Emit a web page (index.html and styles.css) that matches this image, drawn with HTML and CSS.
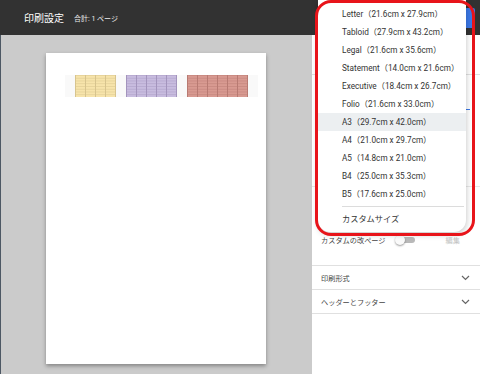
FILE: index.html
```html
<!doctype html>
<html>
	<head>
		<meta charset="utf-8" />
		<title>印刷設定</title>
		<link rel="stylesheet" href="styles.css">
	</head>
	<body>
		<div class="class___app">
			<div class="class___preview">
				<header class="class___topbar">
					<h1 class="class___title">印刷設定</h1>
					<span class="class___total">合計: 1 ページ</span>
				</header>
				<div class="class___stage">
					<div class="class___page">
						<div class="class___sheets">
							<div class="class___sheet class___yellow"></div>
							<div class="class___sheet class___purple"></div>
							<div class="class___sheet class___red"></div>
						</div>
					</div>
				</div>
			</div>
			<aside class="class___side">
				<div class="class___side_head">
					<span class="class___save"></span>
				</div>
				<div class="class___side_body">
					<div class="class___field"><span class="class___underline"></span></div>
					<div class="class___field class___field_tall"></div>
					<div class="class___field class___field_plain"></div>
					<div class="class___row class___row_toggle">
						<span>カスタムの改ページ</span>
						<span class="class___toggle"><span class="class___knob"></span></span>
						<span class="class___edit">編集</span>
					</div>
					<div class="class___row">
						<span>印刷形式</span>
						<svg class="class___chev" width="9" height="6" viewBox="0 0 9 6"><polyline points="1,1 4.5,4.5 8,1" fill="none" stroke="#666" stroke-width="1.2"/></svg>
					</div>
					<div class="class___row">
						<span>ヘッダーとフッター</span>
						<svg class="class___chev" width="9" height="6" viewBox="0 0 9 6"><polyline points="1,1 4.5,4.5 8,1" fill="none" stroke="#666" stroke-width="1.2"/></svg>
					</div>
				</div>
			</aside>
		</div>
		<ul class="class___menu">
			<li>Letter（21.6cm x 27.9cm）</li>
			<li>Tabloid（27.9cm x 43.2cm）</li>
			<li>Legal（21.6cm x 35.6cm）</li>
			<li>Statement（14.0cm x 21.6cm）</li>
			<li>Executive（18.4cm x 26.7cm）</li>
			<li>Folio（21.6cm x 33.0cm）</li>
			<li class="class___active">A3（29.7cm x 42.0cm）</li>
			<li>A4（21.0cm x 29.7cm）</li>
			<li>A5（14.8cm x 21.0cm）</li>
			<li>B4（25.0cm x 35.3cm）</li>
			<li>B5（17.6cm x 25.0cm）</li>
			<li class="class___sep"></li>
			<li>カスタムサイズ</li>
		</ul>
		<div class="class___mark"></div>
	</body>
</html>
```
FILE: styles.css
```css
html, body {
	margin : 0;
	height : 100%;
	overflow : hidden;
}
body {
	font-family : Roboto, "Noto Sans CJK JP", sans-serif;
	color : #333;
	background-color : #fff;
}
.class___app {
	display : flex;
	height : 374px;
}
.class___preview {
	width : 312px;
	display : flex;
	flex-direction : column;
}
.class___topbar {
	flex-shrink : 0;
	height : 35px;
	background-color : #323232;
	display : flex;
	align-items : center;
	padding-left : 24px;
	gap : 10px;
}
.class___title {
	margin : 0;
	font-size : 10px;
	font-weight : 400;
	color : #fff;
}
.class___total {
	font-size : 7px;
	color : #eee;
}
.class___stage {
	flex : 1;
	min-height : 0;
	overflow : hidden;
	background-color : #cbcbcb;
	border-left : 1px solid #4d5864;
	padding : 18px 0 0 45px;
}
.class___page {
	width : 220px;
	height : 311px;
	padding-top : 22px;
	box-sizing : border-box;
	background-color : #fff;
	box-shadow : 0 2px 4px rgba(0, 0, 0, 0.35);
}
.class___sheets {
	display : flex;
	gap : 10px;
	margin-left : 19px;
	padding : 0 10px;
	width : 173px;
	background-color : #f9f9f9;
}
.class___sheet {
	height : 22px;
	background-size : 10px 100%, 100% 2.75px;
}
.class___yellow {
	width : 41px;
	background-color : #f7e4ab;
	background-image : linear-gradient(to right, #d7c48e 1px, transparent 1px), linear-gradient(to bottom, #e6d39a 1px, transparent 1px);
}
.class___purple {
	width : 51px;
	background-color : #c8bcdf;
	background-image : linear-gradient(to right, #a394bd 1px, transparent 1px), linear-gradient(to bottom, #b7aad0 1px, transparent 1px);
}
.class___red {
	width : 61px;
	background-color : #d89a91;
	background-image : linear-gradient(to right, #b87a72 1px, transparent 1px), linear-gradient(to bottom, #c98a82 1px, transparent 1px);
}
.class___side {
	flex : 1;
	display : flex;
	flex-direction : column;
}
.class___side_head {
	flex-shrink : 0;
	height : 35px;
	background-color : #323232;
	display : flex;
	align-items : center;
	justify-content : flex-end;
	padding-right : 5px;
}
.class___save {
	width : 40px;
	height : 20px;
	border-radius : 2px;
	background-color : #3b78e7;
}
.class___side_body {
	flex : 1;
	background-color : #fff;
	font-size : 7.2px;
}
.class___field {
	height : 39px;
	border-bottom : 1px solid #e0e0e0;
	position : relative;
}
.class___underline {
	position : absolute;
	right : 10px;
	bottom : -36px;
	width : 40px;
	height : 1px;
	background-color : #3b78e7;
}
.class___field_tall {
	height : 111px;
	border-bottom-color : #e8e8e8;
}
.class___field_plain {
	height : 41px;
	border-bottom : none;
}
.class___row {
	height : 23px;
	border-bottom : 1px solid #e0e0e0;
	display : flex;
	align-items : center;
	justify-content : space-between;
	padding : 0 10px 0 9px;
	color : #444;
}
.class___row_toggle {
	height : 38px;
	justify-content : flex-start;
	align-items : center;
	padding-bottom : 13px;
	box-sizing : border-box;
}
.class___toggle {
	position : relative;
	width : 15px;
	height : 6px;
	border-radius : 3px;
	background-color : #b9b9b9;
	margin-left : 14px;
}
.class___knob {
	position : absolute;
	left : -5px;
	top : -2px;
	width : 10px;
	height : 10px;
	border-radius : 50%;
	background-color : #fafafa;
	box-shadow : 0 1px 2px rgba(0, 0, 0, 0.4);
}
.class___edit {
	margin-left : auto;
	margin-right : 10px;
	color : #c4c4c4;
}
.class___menu {
	position : absolute;
	left : 318px;
	top : 0;
	width : 148px;
	margin : 0;
	padding : 5px 0 4px;
	list-style : none;
	background-color : #fff;
	box-shadow : 0 2px 6px rgba(0, 0, 0, 0.25);
	border-radius : 0 0 12px 12px;
	font-size : 8.2px;
	color : #333;
}
.class___menu li {
	height : 18px;
	line-height : 18px;
	padding-left : 24px;
	white-space : nowrap;
}
.class___menu .class___active {
	background-color : #eceff1;
}
.class___menu .class___sep {
	height : 0;
	margin : 3px 2px 3px 24px;
	padding : 0;
	border-top : 1px solid #dcdcdc;
}
.class___mark {
	position : absolute;
	left : 315px;
	top : 0;
	width : 154px;
	height : 230px;
	border : 3px solid #e8141a;
	border-radius : 16px;
	pointer-events : none;
}
```
